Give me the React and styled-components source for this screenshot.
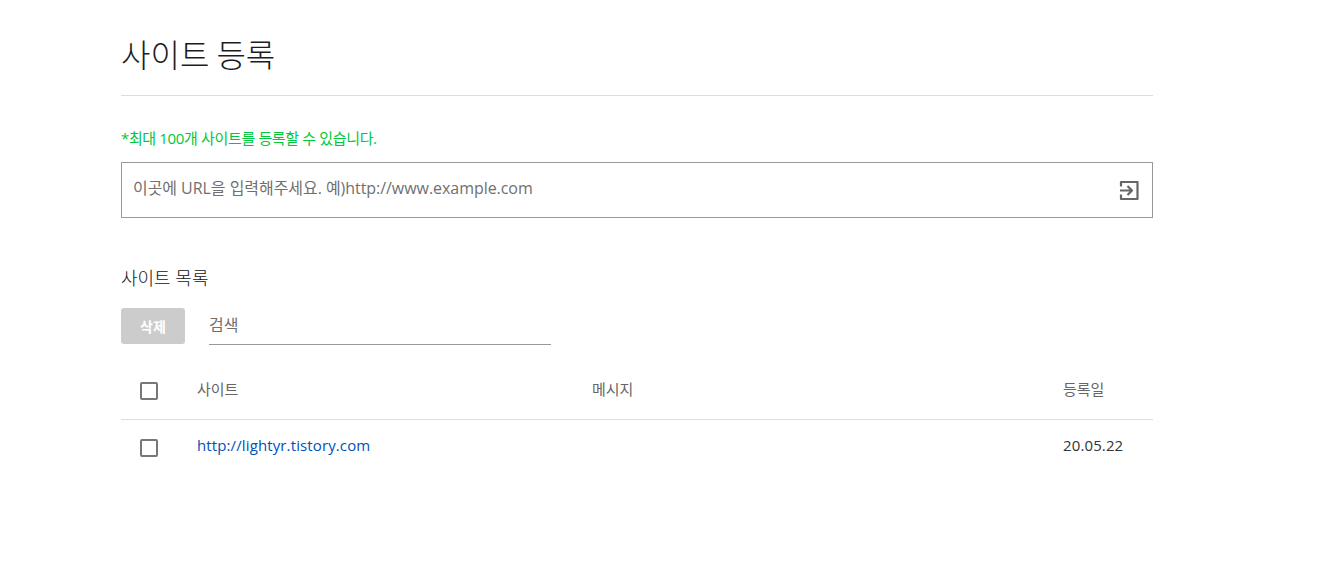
import styled, { createGlobalStyle } from 'styled-components';

const FONT = `"Open Sans", "Noto Sans CJK KR", sans-serif`;

const GlobalStyle = createGlobalStyle`
  html, body {
    margin: 0;
    padding: 0;
    background: #fff;
    font-family: ${FONT};
  }
`;

const Page = styled.div`
  width: 1032px;
  margin-left: 121px;
`;

const Title = styled.h1`
  height: 65px;
  margin: 0;
  padding-top: 30px;
  border-bottom: 1px solid #ddd;
  color: #1c1c1c;
  font-family: "Noto Sans CJK KR", sans-serif;
  font-size: 32px;
  font-weight: 300;
  line-height: 46px;
`;

const Note = styled.p`
  margin: 32px 0 14px;
  color: #00c73c;
  font-size: 15px;
  letter-spacing: -0.35px;
  line-height: 20px;
`;

const UrlBox = styled.div`
  display: flex;
  align-items: center;
  height: 56px;
  padding: 0 12px 0 11px;
  box-sizing: border-box;
  border: 1px solid #999;
`;

const UrlInput = styled.input`
  flex: 1;
  border: 0;
  outline: 0;
  padding: 0 0 4px;
  font: 400 16px ${FONT};
  letter-spacing: -0.05px;
  &::placeholder {
    color: #707070;
    opacity: 1;
  }
`;

const SubmitIcon = styled.svg`
  display: block;
  width: 24px;
  height: 24px;
  margin: 0 -1px 0 0;
  fill: none;
  stroke: #666;
  stroke-width: 2.2;
  stroke-linejoin: round;
`;

const SectionTitle = styled.h2`
  margin: 48px 0 18px;
  color: #111;
  font-size: 18px;
  font-weight: 300;
  line-height: 24px;
`;

const Toolbar = styled.div`
  display: flex;
  gap: 24px;
  margin-bottom: 18px;
`;

const DeleteButton = styled.button`
  width: 64px;
  height: 36px;
  padding: 0;
  border: 0;
  border-radius: 3px;
  background: #ccc;
  color: #fff;
  font: 700 14px ${FONT};
`;

const SearchInput = styled.input`
  width: 342px;
  height: 37px;
  box-sizing: border-box;
  padding: 0 0 2px;
  border: 0;
  border-bottom: 1px solid #999;
  outline: 0;
  font: 400 16px ${FONT};
  &::placeholder {
    color: #707070;
    opacity: 1;
  }
`;

const Row = styled.div`
  display: grid;
  grid-template-columns: 76px 395px 471px 1fr;
  align-items: center;
  box-sizing: border-box;
  height: ${p => p.$head ? '57px' : '53px'};
  padding-bottom: ${p => p.$head ? '2px' : '0'};
  border-bottom: ${p => p.$head ? '1px solid #ddd' : '0'};
  font-size: 15px;
  letter-spacing: ${p => p.$head ? '0' : '0.12px'};
  color: ${p => p.$head ? '#666' : '#333'};
`;

const Cell = styled.span`
  padding-bottom: 3px;
`;

const Check = styled.span`
  display: block;
  width: 14px;
  height: 14px;
  margin: 2px 0 0 19px;
  border: 2px solid #777;
  border-radius: 2px;
`;

const SiteLink = styled.a`
  padding-bottom: 3px;
  color: #0051b5;
  text-decoration: none;
`;

export default function App() {
  return (
    <Page>
      <GlobalStyle />
      <Title>사이트 등록</Title>
      <Note>*최대 100개 사이트를 등록할 수 있습니다.</Note>
      <UrlBox>
        <UrlInput placeholder="이곳에 URL을 입력해주세요. 예)http://www.example.com" />
        <SubmitIcon viewBox="0 0 24 24">
          <path d="M4 8.5V4h16.5v17H4v-4.5" />
          <path d="M3 12.5h11.5M10.5 8l4.5 4.5L10.5 17" />
        </SubmitIcon>
      </UrlBox>
      <SectionTitle>사이트 목록</SectionTitle>
      <Toolbar>
        <DeleteButton>삭제</DeleteButton>
        <SearchInput placeholder="검색" />
      </Toolbar>
      <Row $head>
        <Check />
        <Cell>사이트</Cell>
        <Cell>메시지</Cell>
        <Cell>등록일</Cell>
      </Row>
      <Row>
        <Check />
        <SiteLink href="#">http://lightyr.tistory.com</SiteLink>
        <Cell />
        <Cell>20.05.22</Cell>
      </Row>
    </Page>
  );
}
